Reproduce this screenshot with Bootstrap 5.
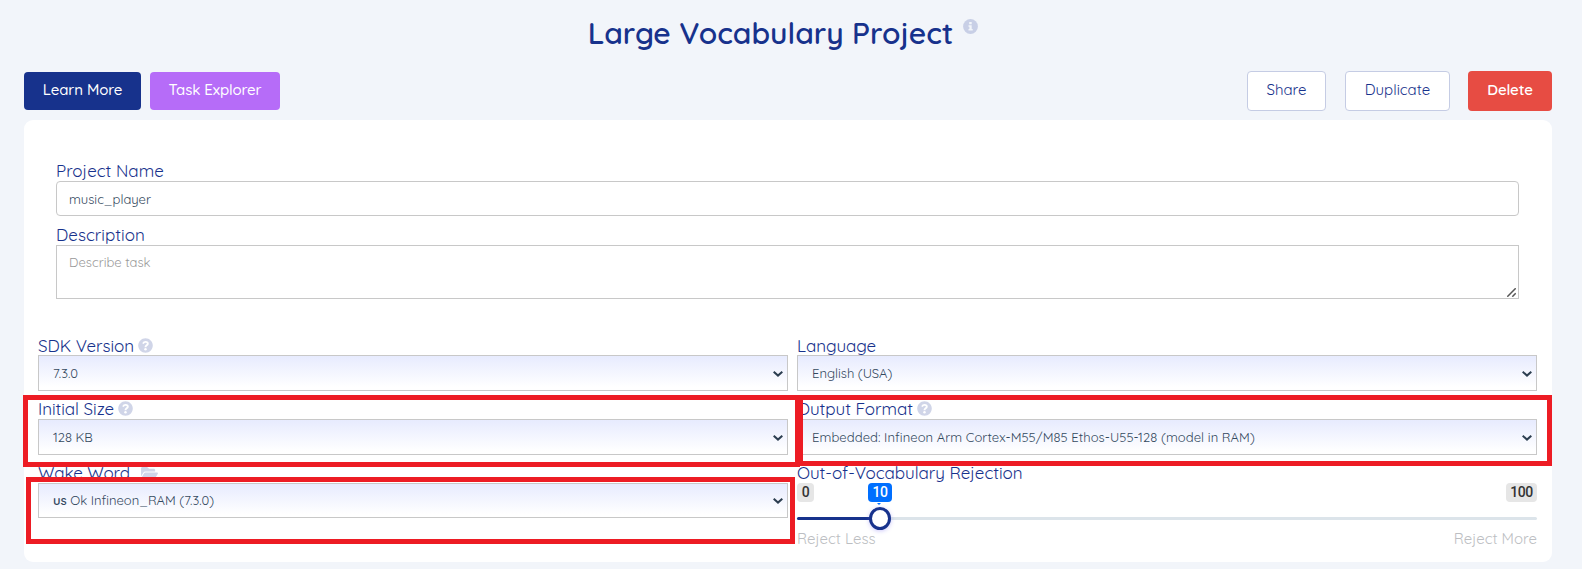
<!DOCTYPE html>
<html lang="en">
<head>
<meta charset="utf-8">
<title>Large Vocabulary Project</title>
<link rel="stylesheet" href="https://cdn.jsdelivr.net/npm/bootstrap@5.3.0/dist/css/bootstrap.min.css">
<script defer src="https://cdn.jsdelivr.net/npm/bootstrap@5.3.0/dist/js/bootstrap.bundle.min.js"></script>
<style>
body{background:#f2f5fa;font-family:Quicksand,Inter,"Liberation Sans",sans-serif;color:#17328c;overflow:hidden}
.page{padding:0 30px 0 24px}
.title{font-size:30px;font-weight:600;height:71px;line-height:36px;padding:15px 10px 0 0;margin:0}
.title svg{margin:4px 0 0 10px}
.bar-top{height:40px}
.act{border:0;border-radius:4px;height:38px;font-size:15px;font-weight:400;padding:0 0 4px;line-height:1;white-space:nowrap}
.act-tall{height:40px}
.navy,.navy:hover{background:#17328c;color:#fff;width:117px;font-weight:500;letter-spacing:-.1px}
.violet,.violet:hover{background:#b66cf8;color:#fff;width:130px;margin-left:9px;font-weight:500;letter-spacing:-.1px}
.plain{background:#fff;color:#17328c;border:1px solid #c5cce4}
.danger{background:#e74c43;color:#fff;width:84px;font-weight:600;letter-spacing:-.15px}
.panel{background:#fff;border-radius:9px;height:442px;margin-top:9px;padding-top:39px}
.main-fields{padding:0 33px 0 32px}
.lbl{height:22px;line-height:24px;font-size:17px;font-weight:400;color:#17328c;white-space:nowrap;display:flex}
.lbl svg{margin:4px 0 0 4px}
.lbl-low{line-height:26px}
.lbl-low svg{margin-top:5px}
.cols .lbl{letter-spacing:-.05px}
.field,.pick{border:1px solid #c8c8c8;font-size:13px;color:#34495e;font-weight:400;width:100%;display:block;background:#fff}
.field{padding:0 11px 0 12px;height:35px;border-radius:4px;outline:0}
.area{height:54px;border-radius:0;padding-top:7px;resize:none}
.area::placeholder{color:#999;opacity:1}
.grip{position:absolute;right:3px;bottom:2px}
.pick{height:36px;padding:1px 4px 0 14px;background:linear-gradient(#e7ebfe,#fff 92%);display:flex;align-items:center;justify-content:space-between}
.cols{margin-top:34px;padding-left:14px;display:grid;grid-template-columns:750px 740px;column-gap:9px;row-gap:6px}
.mk{position:absolute;border:5px solid #ed1c24;z-index:3}
.mk-a{left:-1px;top:275px;width:777px;height:72px}
.mk-b{left:771px;top:275px;width:757px;height:71px;border-left-width:8px}
.mk-c{left:2px;top:357px;width:769px;height:67px}
.tag{position:absolute;top:0;font:500 14px/19px Roboto,sans-serif;letter-spacing:-.5px;background:#e6e6e6;color:#333;border-radius:4px;height:19px;text-align:center}
.rail{position:absolute;top:34px;left:0;width:100%;height:3px;border-radius:2px;background:#dce4ea}
.rail-on{height:3px;background:#17328c;border-radius:2px}
.knob{position:absolute;top:24px;width:22px;height:23px;border:3px solid #17328c;border-radius:50%;background:#fff;box-shadow:0 1px 4px #6a5cf055}
.tip{position:absolute;top:20px;width:4px;border:2px solid transparent;border-top-color:#006fff;height:2px}
.ends{position:absolute;top:45px;width:100%;font-size:15px;line-height:22px;font-weight:400;color:#bcbec2}
</style>
</head>
<body>
<svg width="0" height="0" class="position-absolute">
<symbol id="ask" viewBox="0 0 512 512"><path fill="#d0d5e8" d="M504 256c0 137-111 248-248 248S8 393 8 256 119 8 256 8s248 111 248 248z"/><path fill="none" stroke="#fff" stroke-width="64" d="M170 195c20-42 48-62 88-62 46 0 77 26 77 62 0 53-79 53-79 110v10"/><circle cx="256" cy="385" r="42" fill="#fff"/></symbol>
<symbol id="chev" viewBox="0 0 10 6"><path fill="none" stroke="#2c3e50" stroke-width="2" d="M.7.8 5 4.600 9.300.8"/></symbol>
</svg>
<div class="page">
<h1 class="title d-flex justify-content-center align-items-start"><span>Large Vocabulary Project</span>
<svg width="15" height="15" viewBox="0 0 15 15"><circle cx="7.5" cy="7.5" r="7.4" fill="#c8cfe6"/><path fill="#f2f5fa" d="M6.200 3h2.500v2.200H6.200zM5.500 6.200h3.200v3.900h1v1.500H5.500v-1.500h.9V7.700h-.9z"/></svg></h1>
<div class="bar-top d-flex justify-content-between">
<div class="d-flex align-items-center"><button class="btn act navy">Learn More</button><button class="btn act violet">Task Explorer</button></div>
<div class="d-flex"><button class="btn act act-tall plain" style="width:79px">Share</button><button class="btn act act-tall plain" style="width:105px;margin:0 18px 0 19px">Duplicate</button><button class="btn act act-tall danger">Delete</button></div>
</div>
<main class="panel position-relative">
<div class="main-fields">
<label class="lbl" for="nm">Project Name</label>
<input id="nm" class="field" value="music_player">
<label class="lbl" for="ds" style="margin-top:7px">Description</label>
<div class="position-relative"><textarea id="ds" class="field area" placeholder="Describe task"></textarea><svg class="grip" width="9" height="9" viewBox="0 0 9 9"><path fill="none" stroke="#555" stroke-width="1.500" d="M.3 8.700 8.700.3M5.300 8.700l3.400-3.400"/></svg></div>
</div>
<div class="cols">
<div><div class="lbl lbl-low"><span>SDK Version</span><svg width="15" height="15"><use href="#ask"/></svg></div><div class="pick"><span>7.3.0</span><svg width="10" height="6"><use href="#chev"/></svg></div></div>
<div><div class="lbl lbl-low">Language</div><div class="pick"><span>English (USA)</span><svg width="10" height="6"><use href="#chev"/></svg></div></div>
<div><div class="lbl"><span>Initial Size</span><svg width="15" height="15"><use href="#ask"/></svg></div><div class="pick"><span>128 KB</span><svg width="10" height="6"><use href="#chev"/></svg></div></div>
<div><div class="lbl"><span>Output Format</span><svg width="15" height="15"><use href="#ask"/></svg></div><div class="pick"><span style="letter-spacing:.07px">Embedded: Infineon Arm Cortex-M55/M85 Ethos-U55-128 (model in RAM)</span><svg width="10" height="6"><use href="#chev"/></svg></div></div>
<div><div class="lbl"><span>Wake Word</span><svg width="17" height="15" viewBox="0 0 576 512" style="margin-left:11px"><path fill="#d0d5e8" d="M573 295 500 419a64 64 0 0 1-55 31H45c-18 0-30-20-20-36L97 290a64 64 0 0 1 55-32h400c18 0 30 20 21 37zM152 226h328v-48c0-27-21-48-48-48H272l-64-64H48C21 66 0 87 0 114v278l70-118a97 97 0 0 1 82-48z"/></svg></div><div class="pick" style="height:35px"><span><span class="fw-semibold">us</span> Ok Infineon_RAM (7.3.0)</span><svg width="10" height="6"><use href="#chev"/></svg></div></div>
<div><div class="lbl">Out-of-Vocabulary Rejection</div>
<div class="position-relative"><span class="tag" style="left:0;width:17px">0</span><span class="tag" style="right:0;width:31px">100</span><span class="tag" style="left:71px;width:24px;background:#006fff;color:#fff">10</span><span class="tip" style="left:80px"></span>
<div class="rail"><div class="rail-on" style="width:11%"></div></div><span class="knob" style="left:72px"></span>
<div class="ends d-flex justify-content-between"><span>Reject Less</span><span>Reject More</span></div></div></div>
</div>
<div class="mk mk-a"></div><div class="mk mk-b"></div><div class="mk mk-c"></div>
</main>
</div>
</body>
</html>
